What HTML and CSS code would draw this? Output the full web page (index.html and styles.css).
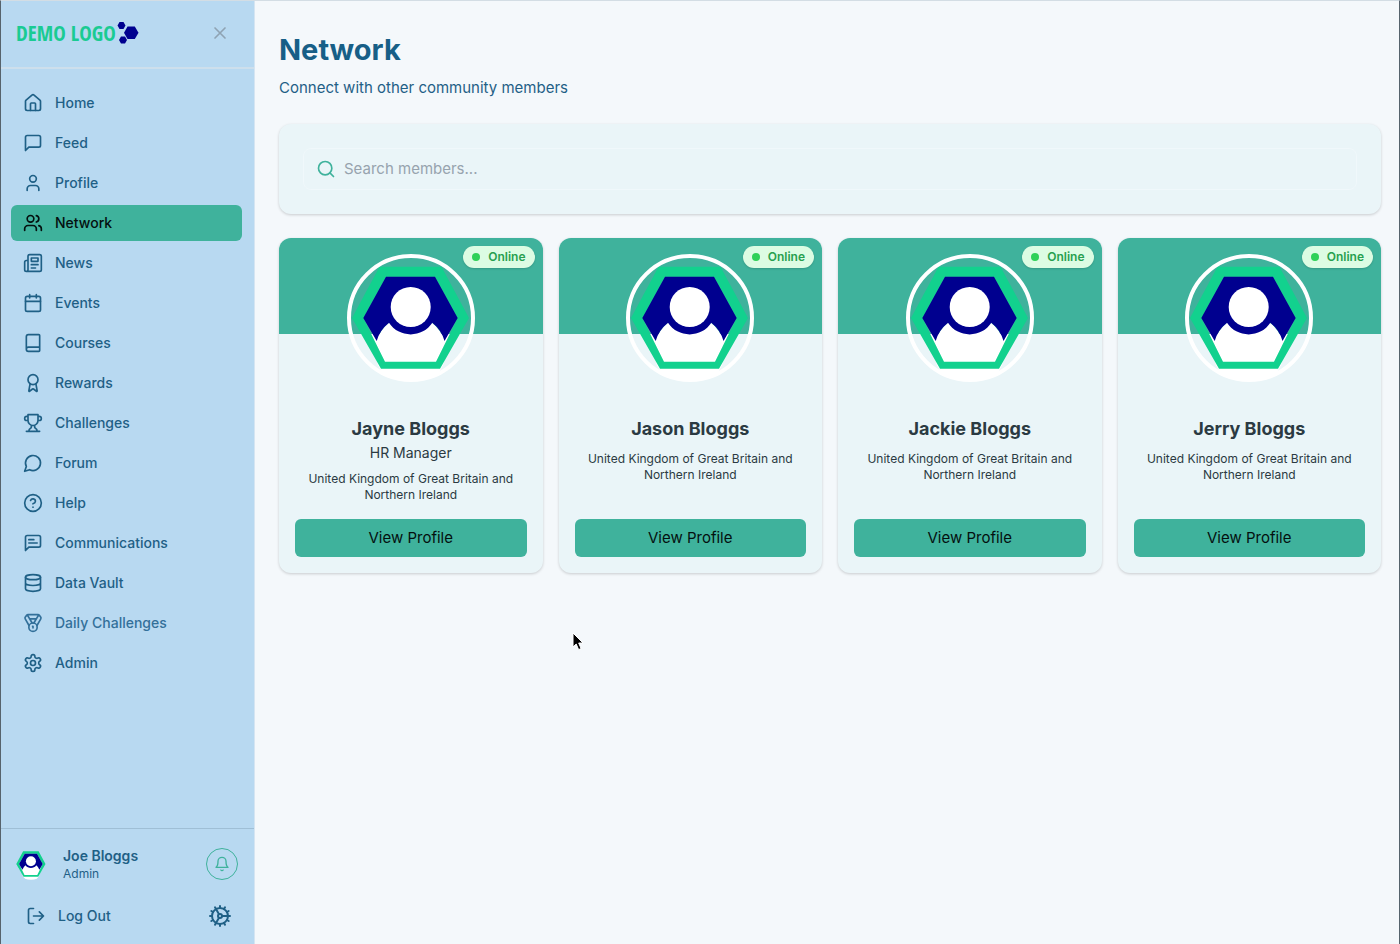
FILE: index.html
```
<!DOCTYPE html>
<html lang="en">
<head>
    <meta charset="UTF-8">
    <meta name="viewport" content="width=device-width, initial-scale=1.0">
    <title>Network</title>
    <link rel="stylesheet" href="styles.css">
</head>
<body>
    <!-- shared avatar artwork -->
    <svg class="defs" width="0" height="0" aria-hidden="true">
        <symbol id="avatar" viewBox="0 0 128 128">
            <clipPath id="avatar-clip"><circle cx="64" cy="64" r="63"/></clipPath>
            <g clip-path="url(#avatar-clip)">
                <path fill="#fff" d="M14 80h99l-22 32H36z"/>
                <circle cx="63.5" cy="97" r="35.5" fill="#fff"/>
                <path fill="#12d18e" fill-rule="evenodd" d="M32.5 12.7h62L122 64 93 114.7H34L5 64zM39 22.7 16.3 64 38 107.7h51L110.7 64 88 22.7z"/>
                <path fill="#00008f" d="M39 22.7h49L110.7 64 97.5 87A35.5 35.5 0 0 0 85.3 68.8a26 26 0 0 1-43.3 0A35.5 35.5 0 0 0 29.7 87L16.3 64z"/>
                <circle cx="63.7" cy="53" r="20" fill="#fff"/>
            </g>
        </symbol>
    </svg>

    <div class="app">
        <aside class="sidebar">
            <div class="sidebar-header">
                <a href="#" class="logo">
                    <span>DEMO LOGO</span>
                    <svg width="22" height="24" viewBox="0 0 22 24" fill="#00008f">
                        <path d="M2.500 1h4l2 3.500-2 3.500h-4l-2-3.500z"/>
                        <path d="M4 15.500h4l2 3.500-2 3.500H4L2 19z"/>
                        <path d="M10.500 5.500h7.300l3.700 6.200-3.700 6.300h-7.300L7 11.700z"/>
                    </svg>
                </a>
                <button class="close" aria-label="Close menu">
                    <svg class="icon" viewBox="0 0 24 24"><path d="M18 6 6 18M6 6l12 12"/></svg>
                </button>
            </div>

            <nav class="nav">
                <a href="#"><svg class="icon" viewBox="0 0 24 24"><path d="M15 21v-8a1 1 0 0 0-1-1h-4a1 1 0 0 0-1 1v8"/><path d="M3 10a2 2 0 0 1 .709-1.528l7-5.999a2 2 0 0 1 2.582 0l7 5.999A2 2 0 0 1 21 10v9a2 2 0 0 1-2 2H5a2 2 0 0 1-2-2z"/></svg>Home</a>
                <a href="#"><svg class="icon" viewBox="0 0 24 24"><path d="M21 15a2 2 0 0 1-2 2H7l-4 4V5a2 2 0 0 1 2-2h14a2 2 0 0 1 2 2z"/></svg>Feed</a>
                <a href="#"><svg class="icon" viewBox="0 0 24 24"><path d="M19 21v-2a4 4 0 0 0-4-4H9a4 4 0 0 0-4 4v2"/><circle cx="12" cy="7" r="4"/></svg>Profile</a>
                <a href="#" class="active"><svg class="icon" viewBox="0 0 24 24"><path d="M16 21v-2a4 4 0 0 0-4-4H6a4 4 0 0 0-4 4v2"/><circle cx="9" cy="7" r="4"/><path d="M22 21v-2a4 4 0 0 0-3-3.870M16 3.130a4 4 0 0 1 0 7.750"/></svg>Network</a>
                <a href="#"><svg class="icon" viewBox="0 0 24 24"><path d="M4 22h16a2 2 0 0 0 2-2V4a2 2 0 0 0-2-2H8a2 2 0 0 0-2 2v16a2 2 0 0 1-2 2zm0 0a2 2 0 0 1-2-2v-9c0-1.100.9-2 2-2h2M18 14h-8M15 18h-5M10 6h8v4h-8z"/></svg>News</a>
                <a href="#"><svg class="icon" viewBox="0 0 24 24"><path d="M8 2v4M16 2v4M3 10h18"/><rect width="18" height="18" x="3" y="4" rx="2"/></svg>Events</a>
                <a href="#"><svg class="icon" viewBox="0 0 24 24"><path d="M4 19.500v-15A2.500 2.500 0 0 1 6.500 2H19a1 1 0 0 1 1 1v18a1 1 0 0 1-1 1H6.500a2.500 2.500 0 0 1 0-5H20"/></svg>Courses</a>
                <a href="#"><svg class="icon" viewBox="0 0 24 24"><circle cx="12" cy="8" r="6"/><path d="m15.477 12.890 1.515 8.526a.5.5 0 0 1-.810.470l-3.580-2.687a1 1 0 0 0-1.197 0l-3.586 2.686a.5.5 0 0 1-.810-.469l1.514-8.526"/></svg>Rewards</a>
                <a href="#"><svg class="icon" viewBox="0 0 24 24"><path d="M6 9H4.500a2.500 2.500 0 0 1 0-5H6M18 9h1.500a2.500 2.500 0 0 0 0-5H18M4 22h16M10 14.660V17c0 .550-.470.980-.970 1.210C7.850 18.750 7 20.240 7 22M14 14.660V17c0 .550.470.980.970 1.210C16.150 18.750 17 20.240 17 22M18 2H6v7a6 6 0 0 0 12 0V2Z"/></svg>Challenges</a>
                <a href="#"><svg class="icon" viewBox="0 0 24 24"><path d="M7.900 20A9 9 0 1 0 4 16.100L2 22Z"/></svg>Forum</a>
                <a href="#"><svg class="icon" viewBox="0 0 24 24"><circle cx="12" cy="12" r="10"/><path d="M9.090 9a3 3 0 0 1 5.830 1c0 2-3 3-3 3M12 17h.010"/></svg>Help</a>
                <a href="#"><svg class="icon" viewBox="0 0 24 24"><path d="M21 15a2 2 0 0 1-2 2H7l-4 4V5a2 2 0 0 1 2-2h14a2 2 0 0 1 2 2zM13 8H7M17 12H7"/></svg>Communications</a>
                <a href="#"><svg class="icon" viewBox="0 0 24 24"><ellipse cx="12" cy="5" rx="9" ry="3"/><path d="M3 5v14a9 3 0 0 0 18 0V5M3 12a9 3 0 0 0 18 0"/></svg>Data Vault</a>
                <a href="#" class="light"><svg class="icon" viewBox="0 0 24 24"><path d="M7.210 15 2.660 7.140a2 2 0 0 1 .130-2.200L4.400 2.800A2 2 0 0 1 6 2h12a2 2 0 0 1 1.600.800l1.600 2.140a2 2 0 0 1 .140 2.200L16.790 15M11 12 5.120 2.200M13 12l5.880-9.800M8 7h8"/><circle cx="12" cy="17" r="5"/><path d="M12 18v-2h-.500"/></svg>Daily Challenges</a>
                <a href="#"><svg class="icon" viewBox="0 0 24 24"><path d="M12.220 2h-.440a2 2 0 0 0-2 2v.180a2 2 0 0 1-1 1.730l-.430.250a2 2 0 0 1-2 0l-.150-.080a2 2 0 0 0-2.730.730l-.220.380a2 2 0 0 0 .730 2.730l.150.100a2 2 0 0 1 1 1.720v.510a2 2 0 0 1-1 1.740l-.150.090a2 2 0 0 0-.730 2.730l.220.380a2 2 0 0 0 2.730.730l.150-.080a2 2 0 0 1 2 0l.430.250a2 2 0 0 1 1 1.730V20a2 2 0 0 0 2 2h.440a2 2 0 0 0 2-2v-.180a2 2 0 0 1 1-1.730l.430-.250a2 2 0 0 1 2 0l.150.080a2 2 0 0 0 2.730-.730l.220-.390a2 2 0 0 0-.730-2.730l-.150-.080a2 2 0 0 1-1-1.740v-.500a2 2 0 0 1 1-1.740l.150-.090a2 2 0 0 0 .730-2.730l-.220-.380a2 2 0 0 0-2.730-.730l-.150.080a2 2 0 0 1-2 0l-.430-.250a2 2 0 0 1-1-1.730V4a2 2 0 0 0-2-2z"/><circle cx="12" cy="12" r="3"/></svg>Admin</a>
            </nav>

            <div class="sidebar-footer">
                <div class="user">
                    <svg class="user-avatar" viewBox="0 0 128 128"><use href="#avatar"/></svg>
                    <div class="user-info">
                        <div class="user-name">Joe Bloggs</div>
                        <div class="user-role">Admin</div>
                    </div>
                    <button class="bell" aria-label="Notifications">
                        <svg class="icon" viewBox="0 0 24 24"><path d="M6 8a6 6 0 0 1 12 0c0 7 3 9 3 9H3s3-2 3-9M10.300 21a1.940 1.940 0 0 0 3.400 0"/></svg>
                    </button>
                </div>
                <div class="actions">
                    <button class="logout">
                        <svg class="icon" viewBox="0 0 24 24"><path d="M9 21H5a2 2 0 0 1-2-2V5a2 2 0 0 1 2-2h4M16 17l5-5-5-5M21 12H9"/></svg>
                        Log Out
                    </button>
                    <button class="settings" aria-label="Settings">
                        <svg class="icon" viewBox="0 0 24 24"><path d="M12 20a8 8 0 1 0 0-16 8 8 0 0 0 0 16Z"/><path d="M12 14a2 2 0 1 0 0-4 2 2 0 0 0 0 4ZM12 2v2M12 22v-2M17 20.660l-1-1.730M11 10.270 7 3.340M20.660 17l-1.730-1M3.340 7l1.730 1M14 12h8M2 12h2M20.660 7l-1.730 1M3.340 17l1.730-1M17 3.340l-1 1.730M11 13.730l-4 6.930"/></svg>
                    </button>
                </div>
            </div>
        </aside>

        <main class="main">
            <h1>Network</h1>
            <p class="subtitle">Connect with other community members</p>

            <div class="search-card">
                <label class="search">
                    <svg class="icon" viewBox="0 0 24 24"><circle cx="11" cy="11" r="8"/><path d="m21 21-4.300-4.300"/></svg>
                    <input type="text" placeholder="Search members..." aria-label="Search members">
                </label>
            </div>

            <div class="members">
                <article class="member">
                    <div class="banner"></div>
                    <span class="badge">Online</span>
                    <svg class="avatar" viewBox="0 0 128 128"><use href="#avatar"/><circle cx="64" cy="64" r="62" fill="none" stroke="#fff" stroke-width="4"/></svg>
                    <div class="member-body">
                        <h2>Jayne Bloggs</h2>
                        <p class="job">HR Manager</p>
                        <p class="location">United Kingdom of Great Britain and Northern Ireland</p>
                        <button class="view">View Profile</button>
                    </div>
                </article>

                <article class="member">
                    <div class="banner"></div>
                    <span class="badge">Online</span>
                    <svg class="avatar" viewBox="0 0 128 128"><use href="#avatar"/><circle cx="64" cy="64" r="62" fill="none" stroke="#fff" stroke-width="4"/></svg>
                    <div class="member-body">
                        <h2>Jason Bloggs</h2>
                        <p class="location">United Kingdom of Great Britain and Northern Ireland</p>
                        <button class="view">View Profile</button>
                    </div>
                </article>

                <article class="member">
                    <div class="banner"></div>
                    <span class="badge">Online</span>
                    <svg class="avatar" viewBox="0 0 128 128"><use href="#avatar"/><circle cx="64" cy="64" r="62" fill="none" stroke="#fff" stroke-width="4"/></svg>
                    <div class="member-body">
                        <h2>Jackie Bloggs</h2>
                        <p class="location">United Kingdom of Great Britain and Northern Ireland</p>
                        <button class="view">View Profile</button>
                    </div>
                </article>

                <article class="member">
                    <div class="banner"></div>
                    <span class="badge">Online</span>
                    <svg class="avatar" viewBox="0 0 128 128"><use href="#avatar"/><circle cx="64" cy="64" r="62" fill="none" stroke="#fff" stroke-width="4"/></svg>
                    <div class="member-body">
                        <h2>Jerry Bloggs</h2>
                        <p class="location">United Kingdom of Great Britain and Northern Ireland</p>
                        <button class="view">View Profile</button>
                    </div>
                </article>
            </div>
        </main>
    </div>

    <svg class="cursor" width="12" height="20" viewBox="0 0 12 20" aria-hidden="true">
        <path d="M1 1v14l3.200-3 2.400 5.600 2.500-1L6.700 11H11z" fill="#000" stroke="#fff" stroke-width="1"/>
    </svg>
</body>
</html>
```

FILE: styles.css
```
* {
    box-sizing: border-box;
}

body {
    margin: 0;
    font-family: Inter, "Liberation Sans", sans-serif;
    font-size: 15px;
    line-height: 24px;
    color: #2b3a42;
    background: #f4f8fb;
}

h1, h2, p {
    margin: 0;
}

a {
    color: inherit;
    text-decoration: none;
}

button {
    font: inherit;
    color: inherit;
    padding: 0;
    border: none;
    background: none;
    cursor: pointer;
}

.defs {
    position: absolute;
}

.icon {
    width: 20px;
    height: 20px;
    flex: none;
    fill: none;
    stroke: currentColor;
    stroke-width: 2;
    stroke-linecap: round;
    stroke-linejoin: round;
}

.app {
    display: flex;
    min-height: 100vh;
    border: 1px solid #56636c;
    border-top-color: #d3dde4;
    border-bottom: none;
}

/* Sidebar */
.sidebar {
    display: flex;
    flex-direction: column;
    flex: none;
    width: 254px;
    color: #1f6086;
    background: #b8d9f1;
    border-right: 1px solid #d5e5f2;
}

.sidebar-header {
    display: flex;
    align-items: center;
    justify-content: space-between;
    height: 68px;
    padding: 0 24px 2px 15px;
    border-bottom: 2px solid #cddfec;
}

.logo {
    display: flex;
    align-items: center;
    gap: 1px;
    font-family: "Liberation Sans Narrow", "Open Sans Condensed", "DejaVu Sans Condensed", sans-serif;
    font-size: 21px;
    font-weight: 800;
    color: #1acb93;
}

.close {
    display: flex;
    color: #8fa3b3;
}

.close .icon {
    stroke-width: 2;
}

.nav {
    display: flex;
    flex-direction: column;
    gap: 4px;
    padding: 16px 12px 16px 10px;
    font-size: 14px;
    font-weight: 500;
}

.nav a {
    display: flex;
    align-items: center;
    gap: 12px;
    height: 36px;
    padding: 0 12px;
    border-radius: 6px;
}

.nav .active {
    color: #04100f;
    background: #3fb29c;
}

.nav .light {
    color: #33709a;
}

.sidebar-footer {
    margin-top: auto;
    padding: 17px 16px 8px 14px;
    border-top: 1px solid #9fbfd6;
}

.user {
    display: flex;
    align-items: center;
}

.user-avatar {
    width: 32px;
    height: 32px;
}

.user-info {
    flex: 1;
    padding-left: 16px;
}

.user-name {
    font-size: 14px;
    font-weight: 600;
    line-height: 20px;
}

.user-role {
    font-size: 12px;
    line-height: 16px;
}

.bell {
    display: flex;
    align-items: center;
    justify-content: center;
    width: 32px;
    height: 32px;
    color: #3fb29c;
    border: 1px solid #3fb29c;
    border-radius: 50%;
}

.bell .icon {
    width: 16px;
    height: 16px;
}

.actions {
    display: flex;
    align-items: center;
    justify-content: space-between;
    height: 40px;
    margin-top: 14px;
    padding: 0 6px 0 11px;
}

.logout {
    display: flex;
    align-items: center;
    gap: 12px;
    font-size: 14px;
    font-weight: 500;
}

.settings {
    display: flex;
}

.settings .icon {
    width: 24px;
    height: 24px;
}

/* Main */
.main {
    flex: 1;
    min-width: 0;
    padding: 31px 18px 24px 24px;
}

h1 {
    font-size: 29px;
    font-weight: 700;
    line-height: 36px;
    color: #175f87;
}

.subtitle {
    margin-top: 8px;
    color: #1f6086;
}

.search-card,
.member {
    background: #eaf5f8;
    border-radius: 12px;
    box-shadow: 0 1px 3px rgba(0, 0, 0, 0.18);
}

.search-card {
    margin: 24px 0;
    padding: 24px;
}

.search {
    display: flex;
    align-items: center;
    gap: 8px;
    height: 42px;
    padding: 0 12px;
    border: 1px solid #f0f8fb;
    border-radius: 8px;
    color: #3fb29c;
}

.search input {
    flex: 1;
    font: inherit;
    color: #2b3a42;
    padding: 0;
    border: none;
    outline: none;
    background: none;
}

.search input::placeholder {
    color: #97a3ae;
}

.members {
    display: grid;
    grid-template-columns: repeat(4, 1fr);
    gap: 16px;
}

.member {
    position: relative;
    display: flex;
    flex-direction: column;
    overflow: hidden;
    text-align: center;
}

.banner {
    height: 96px;
    background: #3fb29c;
}

.badge {
    position: absolute;
    top: 8px;
    right: 8px;
    display: flex;
    align-items: center;
    gap: 8px;
    padding: 3px 9px;
    font-size: 12px;
    font-weight: 600;
    line-height: 16px;
    color: #27a04f;
    background: #dcfce3;
    border-radius: 11px;
    box-shadow: 0 1px 2px rgba(0, 0, 0, 0.15);
}

.badge::before {
    content: "";
    width: 8px;
    height: 8px;
    background: #2fd158;
    border-radius: 50%;
}

.avatar {
    position: absolute;
    top: 16px;
    left: 50%;
    width: 128px;
    height: 128px;
    margin-left: -64px;
}

.member-body {
    display: flex;
    flex: 1;
    flex-direction: column;
    padding: 81px 16px 16px;
}

.member h2 {
    font-size: 18px;
    font-weight: 700;
    line-height: 28px;
}

.job {
    font-size: 14px;
    line-height: 20px;
}

.location {
    margin: 8px 0 16px;
    padding: 0 12px;
    font-size: 12px;
    line-height: 16px;
}

.view {
    height: 38px;
    margin-top: auto;
    color: #04100f;
    background: #3fb29c;
    border-radius: 6px;
}

.cursor {
    position: absolute;
    top: 632px;
    left: 572px;
}
```
